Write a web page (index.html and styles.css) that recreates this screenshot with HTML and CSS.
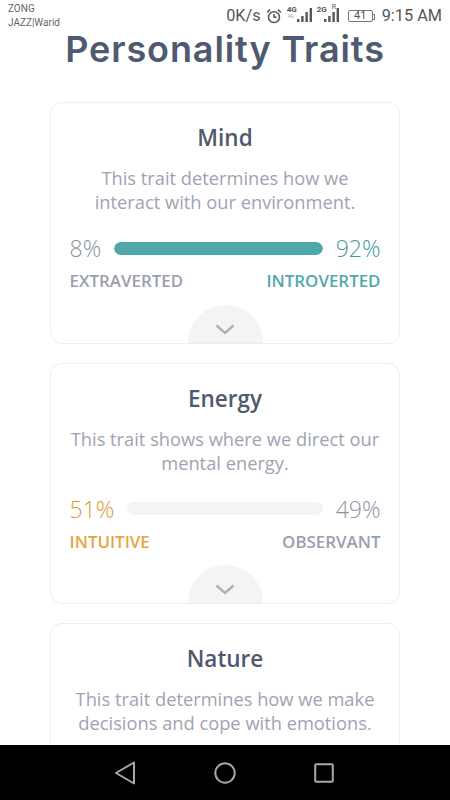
FILE: index.html
```html
<!DOCTYPE html>
<html lang="en">
<head>
<meta charset="utf-8">
<title>Personality Traits</title>
<link rel="stylesheet" href="styles.css">
</head>
<body>
<div class="phone">
  <header class="status">
    <div class="carriers"><div>ZONG</div><div>JAZZ|Warid</div></div>
    <div class="status-right">
      <span class="speed">0K/s</span>
      <svg class="alarm" width="16" height="16" viewBox="0 0 17 17" fill="none" stroke="#555" stroke-width="1.6"><circle cx="8.5" cy="9.7" r="5.8"/><path d="M8.5 6.5v3.4h2.8M1.2 4.8 4.4 1.7M15.8 4.8 12.6 1.7"/></svg>
      <span class="signal signal-first"><span class="net">4G</span><span class="net-sub">4G</span>
        <svg width="15" height="14" viewBox="0 0 15 14" fill="#555"><rect x="0" y="11" width="2.4" height="3"/><rect x="4.2" y="8" width="2.4" height="6"/><rect x="8.4" y="4" width="2.4" height="10"/><rect x="12.6" y="0" width="2.4" height="14"/></svg></span>
      <span class="signal signal-second"><span class="net">2G</span><span class="net-r">R</span>
        <svg width="15" height="14" viewBox="0 0 15 14" fill="#555"><rect x="0" y="11" width="2.4" height="3"/><rect x="4.2" y="8" width="2.4" height="6"/><rect x="8.4" y="4" width="2.4" height="10"/><rect x="12.6" y="0" width="2.4" height="14"/></svg></span>
      <span class="battery"><span class="battery-num">41</span></span>
      <span class="clock">9:15 AM</span>
    </div>
  </header>
  <main class="content">
    <h1 class="title">Personality Traits</h1>
    <section class="card">
      <h2 class="card-title">Mind</h2>
      <p class="card-text">This trait determines how we interact with our environment.</p>
      <div class="meter">
        <span class="pct">8%</span>
        <div class="track"><div class="fill fill-teal"></div></div>
        <span class="pct teal">92%</span>
      </div>
      <div class="labels"><span>EXTRAVERTED</span><span class="teal">INTROVERTED</span></div>
      <div class="toggle"><svg width="20" height="11" viewBox="0 0 20 11" fill="none" stroke="#b0b0b0" stroke-width="2.4"><path d="M1.5 1.5 10 9l8.5-7.5"/></svg></div>
    </section>
    <section class="card">
      <h2 class="card-title">Energy</h2>
      <p class="card-text">This trait shows where we direct our mental energy.</p>
      <div class="meter">
        <span class="pct amber">51%</span>
        <div class="track"></div>
        <span class="pct">49%</span>
      </div>
      <div class="labels"><span class="amber">INTUITIVE</span><span>OBSERVANT</span></div>
      <div class="toggle"><svg width="20" height="11" viewBox="0 0 20 11" fill="none" stroke="#b0b0b0" stroke-width="2.4"><path d="M1.5 1.5 10 9l8.5-7.5"/></svg></div>
    </section>
    <section class="card">
      <h2 class="card-title">Nature</h2>
      <p class="card-text">This trait determines how we make decisions and cope with emotions.</p>
    </section>
  </main>
  <nav class="navbar">
    <svg width="22" height="24" viewBox="0 0 22 24" fill="none" stroke="#a8a8a8" stroke-width="2"><path d="M20 1.5v21L2 12z" stroke-linejoin="round"/></svg>
    <svg width="22" height="22" viewBox="0 0 22 22" fill="none" stroke="#a8a8a8" stroke-width="2"><circle cx="11" cy="11" r="9.7"/></svg>
    <svg width="20" height="20" viewBox="0 0 20 20" fill="none" stroke="#a8a8a8" stroke-width="2"><rect x="1.2" y="1.2" width="17.6" height="17.6" rx="1"/></svg>
  </nav>
</div>
</body>
</html>
```
FILE: styles.css
```css
* { box-sizing: border-box; }
html, body { margin: 0; padding: 0; }
body { background: #fff; font-family: "Open Sans", sans-serif; }
.phone { width: 450px; height: 800px; display: flex; flex-direction: column; overflow: hidden; background: #fff; }
.status { flex: none; height: 27px; display: flex; justify-content: space-between; padding: 2px 8px 0 8px; color: #555; font-family: Roboto, sans-serif; }
.carriers { font-size: 10px; line-height: 13.5px; color: #666; }
.status-right { display: flex; align-items: center; height: 25px; margin-top: 1px; }
.speed { font-size: 16.3px; margin-right: 5px; }
.alarm { margin-right: 5px; }
.signal { position: relative; display: block; align-self: flex-start; width: 24px; height: 17px; margin-top: 2px; }
.signal-first { margin-right: 6px; }
.signal-second { margin-right: 7px; }
.signal svg { position: absolute; bottom: 0; }
.signal-first svg { left: 10px; }
.signal-second svg { left: 7px; }
.net { position: absolute; left: 0; top: 0; font-size: 8px; font-weight: 700; line-height: 9px; }
.net-sub { position: absolute; left: 1px; top: 8px; font-size: 5px; line-height: 6px; color: #aaa; }
.net-r { position: absolute; left: 15px; top: -1px; font-size: 7px; line-height: 7px; }
.battery { position: relative; display: flex; align-items: center; justify-content: center; width: 25px; height: 12px; margin: 0 9px 0 0; border: 1px solid #777; border-radius: 2px; }
.battery::after { content: ""; position: absolute; right: -3px; top: 3px; width: 2px; height: 4px; border: 1px solid #777; border-left: 0; border-radius: 0 1px 1px 0; }
.battery-num { font-size: 11px; line-height: 10px; }
.clock { font-size: 16.3px; white-space: nowrap; }
.content { flex: 1; min-height: 0; overflow: hidden; padding: 0 50px; }
.title { margin: 0 0 31px; text-align: center; font-family: Inter, sans-serif; font-size: 36px; line-height: 44px; letter-spacing: 0.9px; font-weight: 600; color: #4e5a70; white-space: nowrap; }
.card { position: relative; height: 241.7px; margin-bottom: 19px; padding: 21px 18.5px 0; background: #fff; border: 1.5px solid #eeeeef; border-radius: 12px; }
.card-title { margin: 0 0 14px; text-align: center; font-size: 22.5px; line-height: 28px; font-weight: 600; color: #505a6e; }
.card-text { margin: 0 0 21px; text-align: center; font-size: 18.3px; line-height: 24px; color: #a0a3b2; }
.meter { display: flex; align-items: center; gap: 13px; height: 26px; }
.pct { font-size: 23px; line-height: 26px; font-weight: 300; color: #8f93a5; }
.pct.teal { color: #429a9c; }
.pct.amber { color: #dd9a2f; }
.track { flex: 1; height: 13px; border-radius: 7px; background: #f4f4f4; overflow: hidden; }
.fill { height: 100%; border-radius: 7px; }
.fill-teal { width: 100%; background: #51a8aa; }
.teal { color: #51a8aa; }
.amber { color: #e4a643; }
.labels { display: flex; justify-content: space-between; margin-top: 9px; font-size: 16.9px; line-height: 22px; font-weight: 600; color: #9a9eaf; }
.toggle { position: absolute; left: 50%; bottom: 0; width: 75px; height: 38px; margin-left: -37.5px; border-radius: 38px 38px 0 0; background: #f4f4f4; display: flex; justify-content: center; padding-top: 19px; }
.toggle svg { display: block; }
.navbar { flex: none; height: 55px; background: #000; display: flex; align-items: center; justify-content: space-between; padding: 0 116px 0 114px; }
```
